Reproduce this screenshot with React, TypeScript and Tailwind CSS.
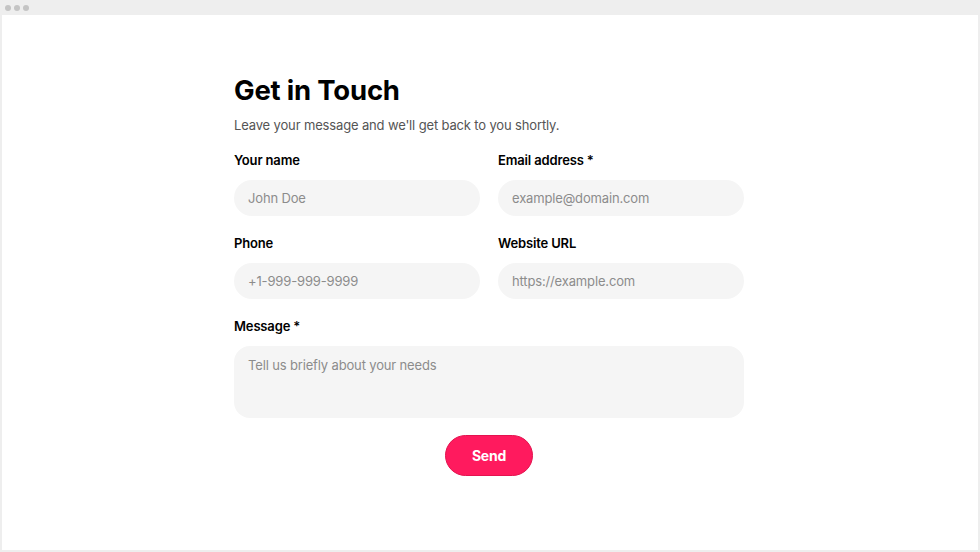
export default function App() {
  const font = { fontFamily: "Inter, 'Noto Sans', sans-serif" };
  return (
    <div className="w-[980px] h-[552px] flex flex-col bg-[#eeeeee] px-[2px] pb-[2px]" style={font}>
      {/* window title bar */}
      <div className="h-[15px] flex items-center gap-[3px] pl-[3px] shrink-0">
        <span className="w-[6px] h-[6px] rounded-full bg-[#c4c4c4]" />
        <span className="w-[6px] h-[6px] rounded-full bg-[#c4c4c4]" />
        <span className="w-[6px] h-[6px] rounded-full bg-[#c4c4c4]" />
      </div>
      <div className="flex-1 bg-white flex justify-center pt-[57px] pr-[2px]">
        <form className="w-[510px] flex flex-col" onSubmit={(e) => e.preventDefault()}>
          <h1 className="text-[27.5px] leading-[36px] font-bold text-black tracking-[-0.2px]">Get in Touch</h1>
          <p className="mt-[7px] text-[13px] leading-[20px] text-[#555555] tracking-[-0.15px]">
            Leave your message and we'll get back to you shortly.
          </p>
          <div className="mt-[15px] grid grid-cols-2 gap-x-[18px] gap-y-[17px]">
            <Field label="Your name" placeholder="John Doe" />
            <Field label="Email address *" placeholder="example@domain.com" />
            <Field label="Phone" placeholder="+1-999-999-9999" />
            <Field label="Website URL" placeholder="https://example.com" />
            <div className="col-span-2 flex flex-col">
              <label className="text-[13px] leading-[20px] font-semibold text-black mb-[10px] tracking-[-0.15px]">Message *</label>
              <textarea
                placeholder="Tell us briefly about your needs"
                className="h-[72px] resize-none rounded-[16px] bg-[#f5f5f5] px-[14px] py-[9px] text-[13px] leading-[20px] tracking-[-0.15px] text-black placeholder:text-[#8c8c8c] outline-none"
              />
            </div>
          </div>
          <div className="mt-[17px] flex justify-center">
            <button
              type="submit"
              className="w-[88px] h-[41px] rounded-full bg-[#ff1a5e] border border-[#e3134f] text-white text-[14px] font-bold tracking-[-0.2px]"
            >
              Send
            </button>
          </div>
        </form>
      </div>
    </div>
  );
}

function Field({ label, placeholder }: { label: string; placeholder: string }) {
  return (
    <div className="flex flex-col">
      <label className="text-[13px] leading-[20px] font-semibold text-black mb-[10px] tracking-[-0.15px]">{label}</label>
      <input
        placeholder={placeholder}
        className="h-[36px] rounded-full bg-[#f5f5f5] px-[14px] text-[13px] tracking-[-0.15px] text-black placeholder:text-[#8c8c8c] outline-none"
      />
    </div>
  );
}
